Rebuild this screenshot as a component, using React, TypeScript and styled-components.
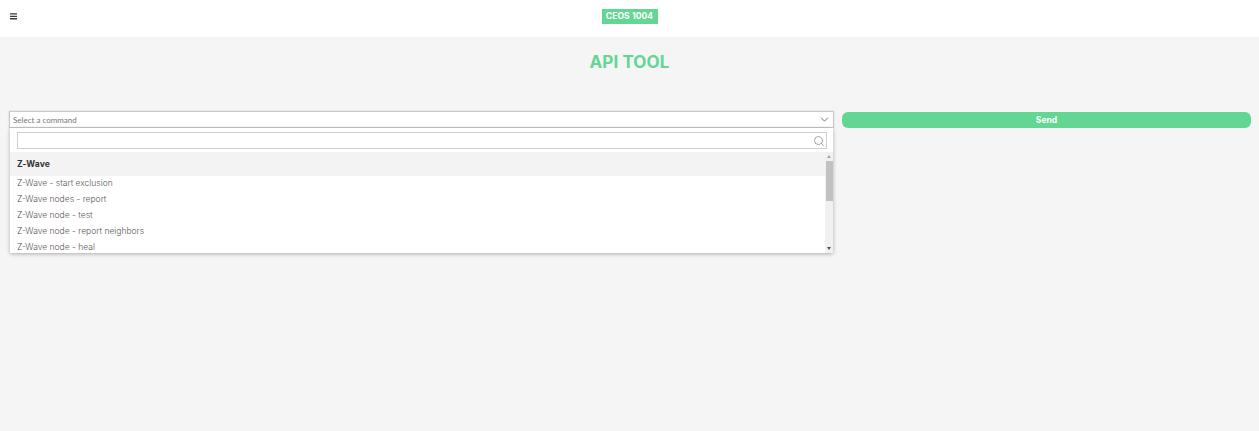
import { createGlobalStyle, styled } from "styled-components";
import { ChevronDown, Search } from "lucide-react";

const GREEN = "#62d692";

const GlobalStyle = createGlobalStyle`
  html, body {
    margin: 0;
    padding: 0;
    background: #f5f5f5;
    font-family: "Inter", "Liberation Sans", sans-serif;
  }
  * { box-sizing: border-box; }
`;

const Page = styled.div`
  min-height: 431px;
  background: #f5f5f5;
`;

const Header = styled.header`
  height: 37px;
  background: #fff;
  display: grid;
  grid-template-columns: 1fr 56px 1fr;
  padding-top: 9px;
`;

const MenuIcon = styled.svg`
  width: 7px;
  height: 7px;
  margin: 4px 0 0 10px;
`;

const Badge = styled.div`
  height: 15px;
  background: ${GREEN};
  color: #fff;
  font-size: 8.5px;
  font-weight: 700;
  line-height: 15px;
  letter-spacing: 0.1px;
  text-align: center;
  white-space: nowrap;
`;

const Title = styled.h1`
  margin: 15px 0 0;
  height: 20px;
  font-size: 17px;
  line-height: 20px;
  font-weight: 700;
  letter-spacing: 0.1px;
  text-align: center;
  color: ${GREEN};
`;

const Controls = styled.div`
  display: flex;
  gap: 8px;
  padding: 39px 8px 0 9px;
`;

const SelectWrap = styled.div`
  position: relative;
  width: 825px;
`;

const SelectBox = styled.div`
  height: 17px;
  background: #fff;
  border: 1px solid #c9c9c9;
  box-shadow: 0 0 2px rgba(0, 0, 0, 0.15);
  display: flex;
  align-items: center;
  justify-content: space-between;
  padding: 0 2px 0 3px;
  font-family: "Lato", sans-serif;
  font-size: 8px;
  color: #777;
`;

const Dropdown = styled.div`
  position: absolute;
  top: 17px;
  left: 1px;
  width: 823px;
  height: 125px;
  background: #fff;
  box-shadow: 0 1px 4px rgba(0, 0, 0, 0.3);
  overflow: hidden;
`;

const SearchBox = styled.div`
  margin: 4px 6px 3px 7px;
  height: 17px;
  border: 1px solid #cfcfcf;
  display: flex;
  align-items: center;
  justify-content: flex-end;
  padding-right: 1px;
  color: #808080;
`;

const ListArea = styled.div`
  display: flex;
  height: 101px;
`;

const ListBody = styled.div`
  flex: 1;
  min-width: 0;
  overflow: hidden;
`;

const GroupRow = styled.div`
  height: 24px;
  background: #f3f3f3;
  padding-left: 7px;
  font-size: 8.5px;
  font-weight: 700;
  letter-spacing: 0.1px;
  line-height: 24px;
  color: #333;
`;

const OptionList = styled.ul`
  list-style: none;
  margin: 0;
  padding: 0;
`;

const Option = styled.li`
  height: 16px;
  padding-left: 7px;
  font-size: 8.5px;
  font-weight: 300;
  line-height: 15px;
  color: #555;
  white-space: nowrap;
`;

const ScrollTrack = styled.div`
  width: 8px;
  background: #f1f1f1;
  display: flex;
  flex-direction: column;
  align-items: center;
  padding: 3px 0;
`;

const ScrollThumb = styled.div`
  width: 7px;
  height: 40px;
  margin: 3px 0 auto;
  background: #c1c1c1;
`;

const ScrollArrow = styled.div<{ $down?: boolean }>`
  width: 0;
  height: 0;
  border-left: 2px solid transparent;
  border-right: 2px solid transparent;
  ${(p) => (p.$down ? "border-top: 3px solid #505050;" : "border-bottom: 3px solid #a3a3a3;")}
`;

const SendButton = styled.button`
  width: 409px;
  height: 16px;
  margin-top: 1px;
  border: 0;
  border-radius: 6px;
  background: ${GREEN};
  color: #fff;
  font-family: inherit;
  font-size: 8.5px;
  font-weight: 700;
  padding: 0;
`;

const options = [
  "Z-Wave - start exclusion",
  "Z-Wave nodes - report",
  "Z-Wave node - test",
  "Z-Wave node - report neighbors",
  "Z-Wave node - heal",
];

export default function App() {
  return (
    <Page>
      <GlobalStyle />
      <Header>
        <MenuIcon viewBox="0 0 7 7">
          <path d="M0 0.3h7v1.3H0zM0 2.7h7v1.3H0zM0 5.1h7v1.3H0z" fill="#3a3a3a" />
        </MenuIcon>
        <Badge>CEOS 1004</Badge>
      </Header>
      <Title>API TOOL</Title>
      <Controls>
        <SelectWrap>
          <SelectBox>
            Select a command
            <ChevronDown size={13} strokeWidth={1.5} color="#555" />
          </SelectBox>
          <Dropdown>
            <SearchBox>
              <Search size={12} strokeWidth={1.4} />
            </SearchBox>
            <ListArea>
              <ListBody>
                <GroupRow>Z-Wave</GroupRow>
                <OptionList>
                  {options.map((o) => (
                    <Option key={o}>{o}</Option>
                  ))}
                </OptionList>
              </ListBody>
              <ScrollTrack>
                <ScrollArrow />
                <ScrollThumb />
                <ScrollArrow $down />
              </ScrollTrack>
            </ListArea>
          </Dropdown>
        </SelectWrap>
        <SendButton>Send</SendButton>
      </Controls>
    </Page>
  );
}
